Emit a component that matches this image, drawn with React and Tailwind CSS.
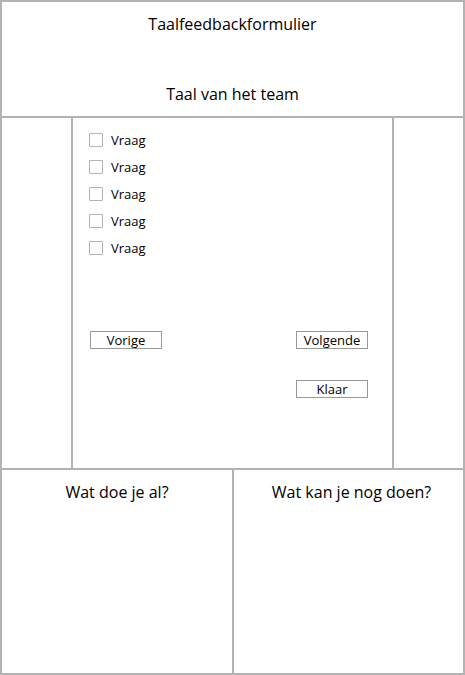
export default function App() {
  const rows = [1, 2, 3, 4, 5];
  return (
    <div className="w-[465px] h-[675px] border-2 border-[#b3b3b3] flex flex-col font-['Open_Sans',sans-serif] text-[#000] bg-white box-border">
      <div className="h-[116px] shrink-0 border-b-2 border-[#b3b3b3] flex flex-col items-center pt-[11px]">
        <div className="text-[16px] leading-[22px]">Taalfeedbackformulier</div>
        <div className="text-[16px] leading-[22px] mt-[48px]">Taal van het team</div>
      </div>
      <div className="h-[352px] shrink-0 border-b-2 border-[#b3b3b3] flex">
        <div className="w-[71px] shrink-0 border-r-2 border-[#b3b3b3]"></div>
        <div className="w-[321px] shrink-0 border-r-2 border-[#b3b3b3] pt-[15px] pr-[24px] flex flex-col">
          <div className="flex flex-col gap-[13px] pl-[16px]">
            {rows.map((r) => (
              <div key={r} className="flex items-center gap-2 h-[14px]">
                <div className="w-[14px] h-[14px] border border-[#b3b3b3] rounded-[1px] bg-white"></div>
                <span className="text-[13px] leading-[14px]">Vraag</span>
              </div>
            ))}
          </div>
          <div className="mt-[76px] pl-[17px] flex justify-between">
            <div className="w-[72px] h-[18px] border border-[#999] flex items-center justify-center text-[13px] leading-[16px] pb-[1px]">Vorige</div>
            <div className="w-[72px] h-[18px] border border-[#999] flex items-center justify-center text-[13px] leading-[16px] pb-[1px]">Volgende</div>
          </div>
          <div className="mt-[31px] flex justify-end">
            <div className="w-[72px] h-[18px] border border-[#999] flex items-center justify-center text-[13px] leading-[16px] pb-[1px]">Klaar</div>
          </div>
        </div>
        <div className="flex-1"></div>
      </div>
      <div className="flex-1 flex">
        <div className="w-[232px] shrink-0 border-r-2 border-[#b3b3b3] flex justify-center pt-[11px]">
          <div className="text-[16px] leading-[22px]">Wat doe je al?</div>
        </div>
        <div className="flex-1 flex justify-center pt-[11px] pl-[6px]">
          <div className="text-[16px] leading-[22px]">Wat kan je nog doen?</div>
        </div>
      </div>
    </div>
  );
}
